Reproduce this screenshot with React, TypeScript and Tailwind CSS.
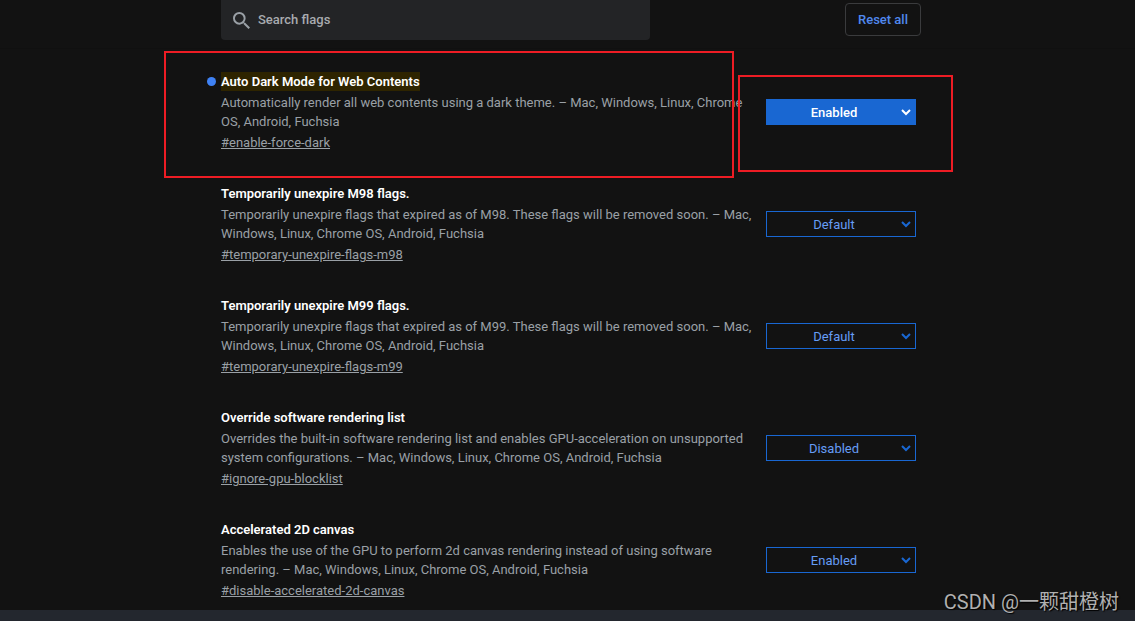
import React from "react";

type Flag = {
  id: string;
  title: string;
  description: string;
  value: string;
  active?: boolean;
};

const options = ["Default", "Enabled", "Disabled"];

const flags: Flag[] = [
  {
    id: "enable-force-dark",
    title: "Auto Dark Mode for Web Contents",
    description:
      "Automatically render all web contents using a dark theme. – Mac, Windows, Linux, Chrome OS, Android, Fuchsia",
    value: "Enabled",
    active: true,
  },
  {
    id: "temporary-unexpire-flags-m98",
    title: "Temporarily unexpire M98 flags.",
    description:
      "Temporarily unexpire flags that expired as of M98. These flags will be removed soon. – Mac, Windows, Linux, Chrome OS, Android, Fuchsia",
    value: "Default",
  },
  {
    id: "temporary-unexpire-flags-m99",
    title: "Temporarily unexpire M99 flags.",
    description:
      "Temporarily unexpire flags that expired as of M99. These flags will be removed soon. – Mac, Windows, Linux, Chrome OS, Android, Fuchsia",
    value: "Default",
  },
  {
    id: "ignore-gpu-blocklist",
    title: "Override software rendering list",
    description:
      "Overrides the built-in software rendering list and enables GPU-acceleration on unsupported system configurations. – Mac, Windows, Linux, Chrome OS, Android, Fuchsia",
    value: "Disabled",
  },
  {
    id: "disable-accelerated-2d-canvas",
    title: "Accelerated 2D canvas",
    description:
      "Enables the use of the GPU to perform 2d canvas rendering instead of using software rendering. – Mac, Windows, Linux, Chrome OS, Android, Fuchsia",
    value: "Enabled",
  },
];

function Header() {
  return (
    <header className="border-b border-[#101010] pb-2 pl-[7px]">
      <div className="mx-auto flex w-full max-w-[700px] items-start justify-between">
        <label className="flex h-10 w-[429px] items-center gap-2 rounded-b bg-[#232426] pl-3 text-[#9aa0a6]">
          <svg viewBox="3 3 17.5 17.5" className="size-[17px] shrink-0" fill="currentColor" aria-hidden="true">
            <path d="M15.5 14h-.79l-.28-.27A6.471 6.471 0 0 0 16 9.5 6.5 6.5 0 1 0 9.5 16c1.61 0 3.09-.59 4.23-1.57l.27.28v.79l5 4.99L20.49 19l-4.99-5zm-6 0C7.01 14 5 11.99 5 9.5S7.01 5 9.5 5 14 7.01 14 9.5 11.99 14 9.5 14z" />
          </svg>
          <input
            type="text"
            aria-label="Search flags"
            placeholder="Search flags"
            className="w-full bg-transparent text-[13px] font-medium text-[#bdc1c6] outline-none placeholder:text-[#a8abaf]"
          />
        </label>
        <button
          type="button"
          className="mt-[3px] h-[33px] rounded border border-[#3a3b3d] px-3 text-[13px] font-medium text-[#5088ee]"
        >
          Reset all
        </button>
      </div>
    </header>
  );
}

function FlagRow({ flag }: { flag: Flag }) {
  return (
    <section className="relative flex items-center justify-between gap-3 pr-[5px]">
      {flag.active && (
        <span className="absolute top-[5px] -left-3.5 size-[9px] rounded-full bg-[#3f82f5]" />
      )}
      <div className="min-w-0 max-w-[533px] flex-1 text-[13px] leading-[19px]">
        <h3 className="font-semibold text-white">
          {flag.active ? (
            <mark className="inline-block bg-[#2e2400] text-white">{flag.title}</mark>
          ) : (
            flag.title
          )}
        </h3>
        <p className="my-0.5 text-[#9aa0a6]">{flag.description}</p>
        <a href={"#" + flag.id} className="block w-fit text-[#9aa0a6] underline">
          #{flag.id}
        </a>
      </div>
      <div className="relative w-[150px] shrink-0">
        <select
          aria-label={flag.title}
          defaultValue={flag.value}
          className={
            flag.active
              ? "block h-[26px] w-full appearance-none border border-[#1967d2] bg-[#1967d2] pt-0.5 pr-3.5 text-[13px] font-medium text-white [text-align-last:center]"
              : "block h-[26px] w-full appearance-none border border-[#1967d2] bg-[#121212] pt-0.5 pr-3.5 text-[13px] text-[#669df6] [text-align-last:center]"
          }
        >
          {options.map((option) => (
            <option key={option}>{option}</option>
          ))}
        </select>
        <svg
          viewBox="0 0 10 7"
          className={
            flag.active
              ? "pointer-events-none absolute top-[10px] right-[5px] h-[7px] w-[10px] text-white"
              : "pointer-events-none absolute top-[10px] right-[5px] h-[7px] w-[10px] text-[#1967d2]"
          }
          fill="none"
          stroke="currentColor"
          strokeWidth="2"
          aria-hidden="true"
        >
          <path d="M1 1l4 4 4-4" />
        </svg>
      </div>
      {flag.active && (
        <>
          <span className="pointer-events-none absolute -top-[21px] -left-[57px] h-[127px] w-[570px] border-2 border-[#ed1c24]" />
          <span className="pointer-events-none absolute top-[3px] left-[517px] h-[97px] w-[215px] border-2 border-[#ed1c24]" />
        </>
      )}
    </section>
  );
}

export default function App() {
  return (
    <div className="relative flex min-h-screen flex-col bg-[#121212] font-['Roboto',sans-serif]">
      <Header />
      <main className="flex-1 pt-[23px] pb-[10px] pl-[7px]">
        <div className="mx-auto flex w-full max-w-[700px] flex-col gap-8">
          {flags.map((flag) => (
            <FlagRow key={flag.id} flag={flag} />
          ))}
        </div>
      </main>
      <footer className="h-[11px] bg-[#23272e]" />
      <p className="absolute right-4 bottom-[3px] font-['Roboto','Noto_Sans_CJK_SC',sans-serif] text-[20px] leading-8 text-[#b0b0b0] [text-shadow:1px_1px_1px_#000]">
        CSDN @一颗甜橙树
      </p>
    </div>
  );
}
